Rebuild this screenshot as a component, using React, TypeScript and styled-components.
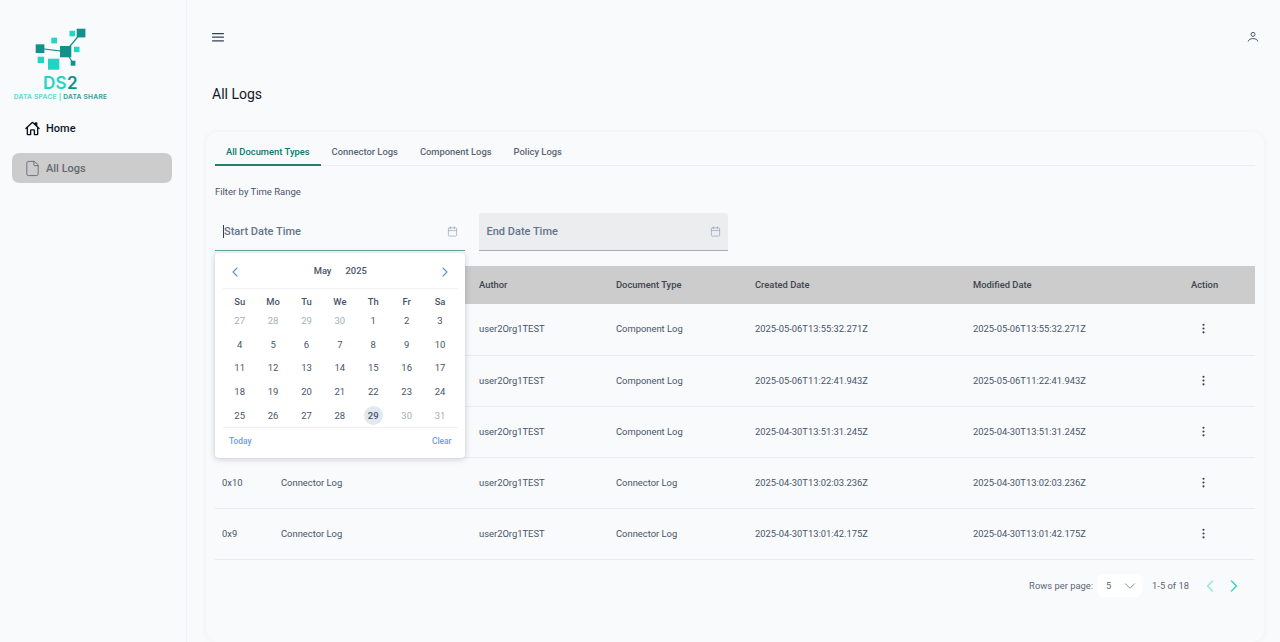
import React from 'react';
import styled, { createGlobalStyle } from 'styled-components';
import { Calendar, ChevronDown, ChevronLeft, ChevronRight, EllipsisVertical, File } from 'lucide-react';
import { IoHomeOutline } from 'react-icons/io5';

const GlobalStyle = createGlobalStyle`
  html, body {
    margin: 0;
    height: 100%;
    overflow: hidden;
    background: #f9fafc;
    font-family: Roboto, "Liberation Sans", sans-serif;
  }
  * { box-sizing: border-box; }
`;

const Page = styled.div`
  display: flex;
  width: 1280px;
  height: 642px;
  overflow: hidden;
`;

const Sidebar = styled.aside`
  flex: 0 0 187px;
  border-right: 1px solid #f0f1f4;
  padding: 28px 14px 0 12px;
`;

const Logo = styled.div`
  display: flex;
  flex-direction: column;
  align-items: center;
  width: 97px;
  margin: 0 0 12px 0;
`;

const LogoName = styled.div`
  font-family: Inter, sans-serif;
  font-size: 17px;
  line-height: 15px;
  font-weight: 600;
  letter-spacing: 0.4px;
  color: #20d5c4;
  margin-top: 6px;
  span { color: #12908a; }
`;

const LogoTag = styled.div`
  font-family: Inter, sans-serif;
  font-size: 6.6px;
  line-height: 8px;
  font-weight: 700;
  letter-spacing: 0.25px;
  white-space: nowrap;
  color: #5fdccf;
  margin-top: 2px;
  span { color: #3aa39c; }
`;

const NavItem = styled.div<{ $active?: boolean }>`
  display: flex;
  align-items: center;
  gap: 5px;
  height: 30px;
  padding-left: 11px;
  margin-bottom: 10px;
  border-radius: 7px;
  font-size: 11px;
  font-weight: 500;
  color: ${p => (p.$active ? '#666a70' : '#0f172a')};
  background: ${p => (p.$active ? '#cccccc' : 'transparent')};
`;

const NavIcon = styled.span<{ $active?: boolean }>`
  display: flex;
  justify-content: center;
  width: 18px;
  color: ${p => (p.$active ? '#6b7078' : '#0b1220')};
`;

const HomeIcon = styled(IoHomeOutline)`
  path { stroke-width: 46px; }
`;

const Main = styled.main`
  flex: 1;
  min-width: 0;
  display: flex;
  flex-direction: column;
  padding: 0 16px 0 19px;
`;

const TopBar = styled.header`
  display: flex;
  align-items: center;
  justify-content: space-between;
  height: 74px;
  padding: 0 5px 0 6px;
`;

const Title = styled.h1`
  margin: 0;
  padding-left: 6px;
  height: 58px;
  line-height: 40px;
  font-size: 14px;
  font-weight: 400;
  color: #111827;
`;

const Card = styled.section`
  flex: 1;
  padding: 9px 9px 0;
  border-radius: 12px;
  background: #f9fafc;
  box-shadow: 0 0 6px rgba(15, 23, 42, 0.05);
`;

const Tabs = styled.nav`
  display: flex;
  height: 25px;
  border-bottom: 1px solid #eceef1;
`;

const Tab = styled.div<{ $active?: boolean }>`
  height: 25px;
  padding: 0 11px;
  line-height: 22px;
  font-size: 9.4px;
  font-weight: 500;
  white-space: nowrap;
  color: ${p => (p.$active ? '#11766d' : '#5b6675')};
  border-bottom: 2px solid ${p => (p.$active ? '#23806f' : 'transparent')};
`;

const FilterLabel = styled.div`
  margin-top: 19px;
  height: 13px;
  line-height: 13px;
  font-size: 9.5px;
  color: #475569;
`;

const Fields = styled.div`
  display: flex;
  gap: 14px;
  margin-top: 15px;
`;

const FieldWrap = styled.div`
  position: relative;
  width: 249.5px;
`;

const Field = styled.div<{ $focused?: boolean }>`
  display: flex;
  align-items: center;
  justify-content: space-between;
  height: 38px;
  padding: 0 7px 0 8px;
  border-radius: 3px 3px 0 0;
  font-size: 11px;
  font-weight: 500;
  color: #64748b;
  background: ${p => (p.$focused ? 'transparent' : '#ecedef')};
  border-bottom: 1px solid ${p => (p.$focused ? '#5fa79b' : '#a9adb3')};
  svg { color: #94a3b8; }
`;

const Caret = styled.span`
  border-left: 1px solid #334155;
`;

const Popover = styled.div`
  position: absolute;
  z-index: 5;
  top: 40px;
  left: 0;
  width: 249.5px;
  height: 205px;
  padding: 0 7px 0 8px;
  border-radius: 4px;
  background: #ffffff;
  box-shadow: 0 1px 6px rgba(15, 23, 42, 0.22);
`;

const PopHead = styled.div`
  display: flex;
  align-items: center;
  justify-content: space-between;
  height: 36px;
  padding: 0 4px;
  border-bottom: 1px solid #eff1f4;
  color: #5b8fd6;
  svg { margin-top: 2px; }
`;

const PopMonth = styled.div`
  display: flex;
  gap: 14px;
  font-size: 9.4px;
  font-weight: 500;
  color: #475569;
`;

const Grid = styled.div`
  display: grid;
  grid-template-columns: repeat(7, 33.4px);
  grid-template-rows: 16px repeat(5, 23.6px);
  justify-items: center;
  align-items: center;
  padding-top: 4px;
  border-bottom: 1px solid #eff1f4;
`;

const WeekDay = styled.div`
  font-size: 9.4px;
  font-weight: 500;
  color: #475569;
`;

const Day = styled.div<{ $muted?: boolean; $selected?: boolean }>`
  width: 19px;
  height: 19px;
  line-height: 19px;
  border-radius: 50%;
  text-align: center;
  font-size: 9.5px;
  color: ${p => (p.$muted ? '#a8aeb8' : '#475569')};
  background: ${p => (p.$selected ? '#e2e8f0' : 'transparent')};
  font-weight: ${p => (p.$selected ? 500 : 400)};
`;

const PopFoot = styled.div`
  display: flex;
  align-items: center;
  justify-content: space-between;
  height: 26px;
  padding: 1px 6px 0;
  font-size: 8.4px;
  font-weight: 500;
  color: #6b9ee0;
`;

const TableBox = styled.table`
  width: 100%;
  margin-top: 15px;
  border-collapse: collapse;
  table-layout: fixed;
  font-size: 9.4px;
`;

const Th = styled.th<{ $w: number }>`
  width: ${p => p.$w}px;
  height: 38px;
  padding: 0 7px 2px;
  text-align: left;
  font-weight: 500;
  color: #3f444c;
  background: #cccccc;
`;

const Td = styled.td`
  height: 51px;
  padding: 0 7px 1px;
  color: #475569;
  border-bottom: 1px solid #e9ebef;
`;

const Kebab = styled.div`
  display: flex;
  padding-left: 6px;
  color: #334155;
`;

const Pager = styled.div`
  display: flex;
  align-items: center;
  justify-content: flex-end;
  height: 52px;
  padding-right: 11px;
  font-size: 9.4px;
  color: #5b6675;
`;

const RowsSelect = styled.div`
  display: flex;
  align-items: center;
  justify-content: space-between;
  width: 45px;
  height: 23px;
  margin: 0 10px 0 4px;
  padding: 0 3px 0 9px;
  border-radius: 6px;
  background: #ffffff;
  svg { color: #7b8694; }
`;

const PageButton = styled.span<{ $off?: boolean }>`
  display: flex;
  margin-left: ${p => (p.$off ? 10.5 : 4.5)}px;
  color: ${p => (p.$off ? '#8ce8da' : '#2dd4bf')};
`;

const columns = [
  { label: '', w: 59 },
  { label: '', w: 198 },
  { label: 'Author', w: 137 },
  { label: 'Document Type', w: 139 },
  { label: 'Created Date', w: 218 },
  { label: 'Modified Date', w: 218 },
  { label: 'Action', w: 71 },
];

// first two columns of the top rows sit behind the open date picker
const rows = [
  { id: '', name: '', type: 'Component Log', date: '2025-05-06T13:55:32.271Z' },
  { id: '', name: '', type: 'Component Log', date: '2025-05-06T11:22:41.943Z' },
  { id: '', name: '', type: 'Component Log', date: '2025-04-30T13:51:31.245Z' },
  { id: '0x10', name: 'Connector Log', type: 'Connector Log', date: '2025-04-30T13:02:03.236Z' },
  { id: '0x9', name: 'Connector Log', type: 'Connector Log', date: '2025-04-30T13:01:42.175Z' },
];

const weekDays = ['Su', 'Mo', 'Tu', 'We', 'Th', 'Fr', 'Sa'];
const days = [27, 28, 29, 30, ...Array.from({ length: 31 }, (_, i) => i + 1)];

function LogoMark() {
  return (
    <svg width="51" height="42" viewBox="35 28 51 42">
      <path d="M40 48.5 L65.5 51.5 L81 33 M65.5 51.5 L73 63" stroke="#12908a" strokeWidth="1.2" fill="none" />
      <rect x="76.7" y="28.7" width="8.7" height="8.7" fill="#12908a" />
      <rect x="69.5" y="30.8" width="5.5" height="5.5" fill="#20d5c4" />
      <rect x="51.3" y="37.7" width="5.7" height="5.7" fill="#20d5c4" />
      <rect x="35.7" y="44.3" width="8.7" height="8.7" fill="#12908a" />
      <rect x="60" y="46" width="11.3" height="11.3" fill="#12908a" />
      <rect x="74" y="46.7" width="5.5" height="5.5" fill="#20d5c4" />
      <rect x="37.7" y="56.7" width="6.3" height="6.3" fill="#20d5c4" />
      <rect x="48" y="58.7" width="11.3" height="11" fill="#20d5c4" />
      <rect x="70.7" y="60.7" width="4.7" height="5" fill="#12908a" />
    </svg>
  );
}

function MenuIcon() {
  return (
    <svg width="12" height="9" viewBox="0 0 12 9" fill="#334155">
      <rect y="0" width="12" height="1.2" rx="0.5" />
      <rect y="3.6" width="12" height="1.2" rx="0.5" />
      <rect y="7.2" width="12" height="1.2" rx="0.5" />
    </svg>
  );
}

function UserIcon() {
  return (
    <svg width="12" height="12" viewBox="0 0 12 12" fill="none" stroke="#475569" strokeWidth="1">
      <circle cx="6" cy="3.4" r="2" />
      <path d="M1.2 10.5 C1.6 8.4 3.6 7.6 6 7.6 C8.4 7.6 10.4 8.4 10.8 10.5" />
    </svg>
  );
}

export default function App() {
  return (
    <Page>
      <GlobalStyle />
      <Sidebar>
        <Logo>
          <LogoMark />
          <LogoName>DS<span>2</span></LogoName>
          <LogoTag>DATA SPACE | <span>DATA SHARE</span></LogoTag>
        </Logo>
        <NavItem>
          <NavIcon><HomeIcon size={15} /></NavIcon>
          Home
        </NavItem>
        <NavItem $active>
          <NavIcon $active><File size={17} strokeWidth={1.4} /></NavIcon>
          All Logs
        </NavItem>
      </Sidebar>
      <Main>
        <TopBar>
          <MenuIcon />
          <UserIcon />
        </TopBar>
        <Title>All Logs</Title>
        <Card>
          <Tabs>
            <Tab $active>All Document Types</Tab>
            <Tab>Connector Logs</Tab>
            <Tab>Component Logs</Tab>
            <Tab>Policy Logs</Tab>
          </Tabs>
          <FilterLabel>Filter by Time Range</FilterLabel>
          <Fields>
            <FieldWrap>
              <Field $focused>
                <Caret>Start Date Time</Caret>
                <Calendar size={11} strokeWidth={1.5} />
              </Field>
              <Popover>
                <PopHead>
                  <ChevronLeft size={16} strokeWidth={1.6} />
                  <PopMonth><span>May</span><span>2025</span></PopMonth>
                  <ChevronRight size={16} strokeWidth={1.6} />
                </PopHead>
                <Grid>
                  {weekDays.map(d => <WeekDay key={d}>{d}</WeekDay>)}
                  {days.map((d, i) => (
                    <Day key={i} $muted={i < 4 || i > 32} $selected={i === 32}>{d}</Day>
                  ))}
                </Grid>
                <PopFoot>
                  <span>Today</span>
                  <span>Clear</span>
                </PopFoot>
              </Popover>
            </FieldWrap>
            <FieldWrap>
              <Field>
                End Date Time
                <Calendar size={11} strokeWidth={1.5} />
              </Field>
            </FieldWrap>
          </Fields>
          <TableBox>
            <thead>
              <tr>
                {columns.map((c, i) => <Th key={i} $w={c.w}>{c.label}</Th>)}
              </tr>
            </thead>
            <tbody>
              {rows.map(r => (
                <tr key={r.date}>
                  <Td>{r.id}</Td>
                  <Td>{r.name}</Td>
                  <Td>user2Org1TEST</Td>
                  <Td>{r.type}</Td>
                  <Td>{r.date}</Td>
                  <Td>{r.date}</Td>
                  <Td>
                    <Kebab><EllipsisVertical size={13} /></Kebab>
                  </Td>
                </tr>
              ))}
            </tbody>
          </TableBox>
          <Pager>
            Rows per page:
            <RowsSelect>
              5
              <ChevronDown size={18} strokeWidth={1.2} />
            </RowsSelect>
            1-5 of 18
            <PageButton $off><ChevronLeft size={20} strokeWidth={1.6} /></PageButton>
            <PageButton><ChevronRight size={20} strokeWidth={1.6} /></PageButton>
          </Pager>
        </Card>
      </Main>
    </Page>
  );
}
